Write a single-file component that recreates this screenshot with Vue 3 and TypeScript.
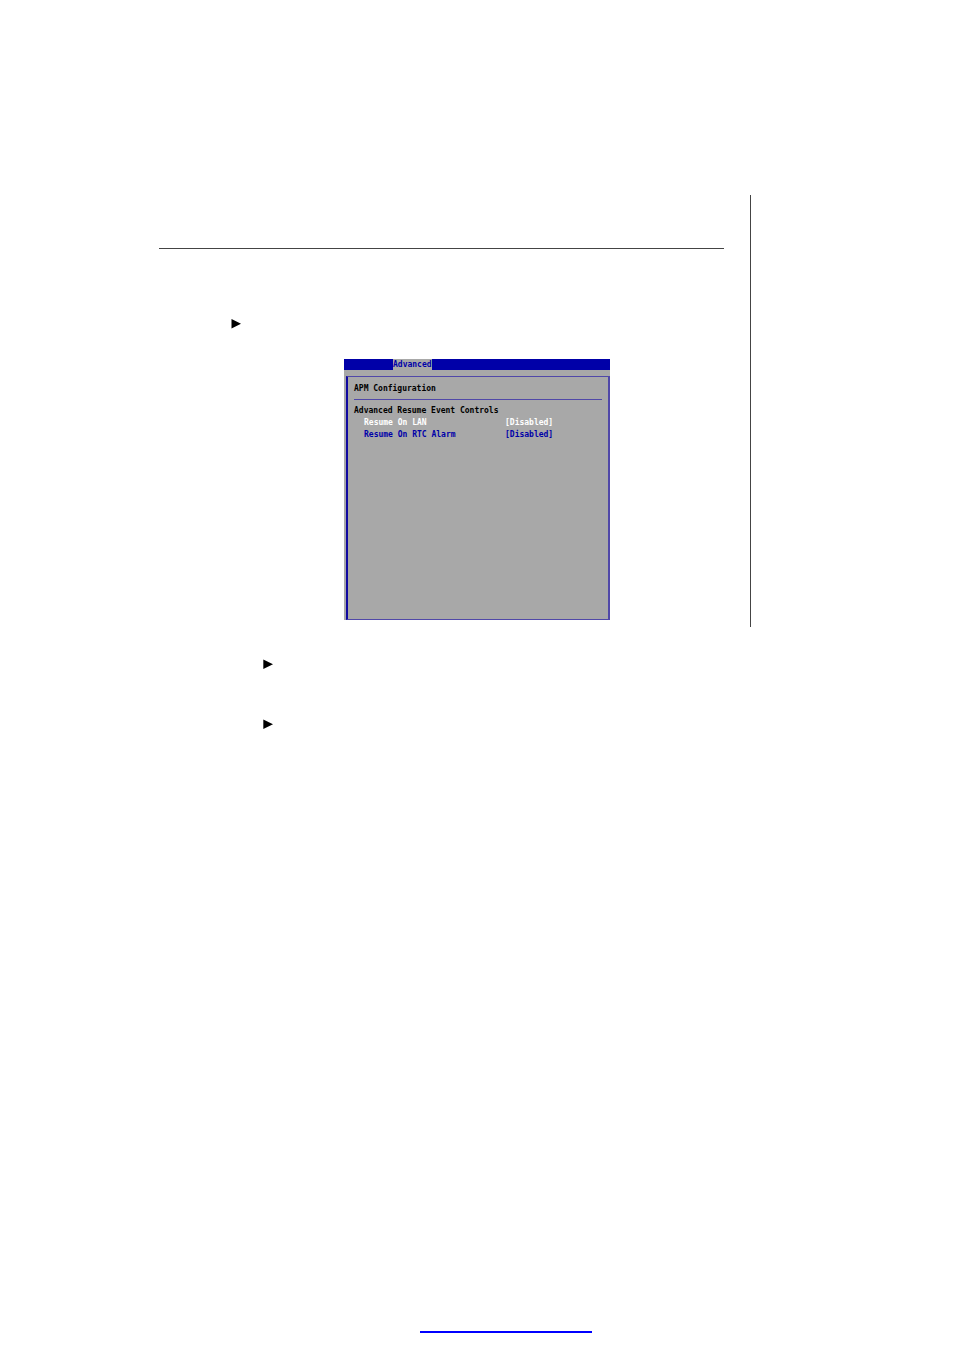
<script setup lang="ts">
interface Setting {
  id: string
  label: string
  value: string
  active: boolean
}

const settings: Setting[] = [
  { id: 'lan', label: 'Resume On LAN', value: '[Disabled]', active: true },
  { id: 'rtc', label: 'Resume On RTC Alarm', value: '[Disabled]', active: false },
]

const notes: number[] = [1, 2]
</script>

<template>
  <div class="page">
    <main class="sheet">
      <hr class="rule" />
      <svg class="marker" viewBox="0 0 10 10" aria-hidden="true"><path d="M0.5 0 L10 4.7 L0.5 9.5 Z" /></svg>

      <section class="bios">
        <nav class="menu">
          <button type="button" class="tab">Advanced</button>
        </nav>
        <div class="frame">
          <h1 class="title">APM Configuration</h1>
          <h2 class="group">Advanced Resume Event Controls</h2>
          <div
            v-for="item in settings"
            :key="item.id"
            class="setting"
            :class="{ active: item.active }"
          >
            <span :id="item.id">{{ item.label }}</span>
            <button type="button" class="value" :aria-describedby="item.id">{{ item.value }}</button>
          </div>
        </div>
      </section>
    </main>

    <ul class="notes">
      <li v-for="note in notes" :key="note" class="note">
        <svg class="arrow" viewBox="0 0 10 10" aria-hidden="true"><path d="M0.3 0.5 L10 5.2 L0.3 10 Z" /></svg>
      </li>
    </ul>

    <footer class="footer">
      <a class="link" href="#"></a>
    </footer>
  </div>
</template>

<style>
body {
  margin: 0;
  background: #fff;
}
</style>

<style scoped>
.page {
  box-sizing: border-box;
  display: flex;
  flex-direction: column;
  min-height: 100vh;
  padding: 195px 203px 16px 158px;
  background: #fff;
}

.sheet {
  display: flex;
  flex-direction: column;
  padding: 53px 0 7px;
  border-right: 1px solid #444;
}

.rule {
  box-sizing: border-box;
  align-self: stretch;
  height: 1px;
  margin: 0 26px 0 1px;
  border: 0;
  background: #444;
}

.marker,
.arrow {
  display: block;
  width: 10px;
  height: 10px;
  fill: #000;
}

.marker {
  margin: 70px 0 30px 73px;
}

.bios {
  display: flex;
  flex-direction: column;
  min-height: 261px;
  margin: 0 140px 0 186px;
  background: #a8a8a8;
  color: #000;
  font: bold 8px/12px "DejaVu Sans Mono", monospace;
}

.menu {
  display: flex;
  height: 11px;
  padding-left: 49px;
  background: #0000a8;
}

.tab,
.value {
  margin: 0;
  padding: 0;
  border: 0;
  background: none;
  color: inherit;
  font: inherit;
  text-align: left;
}

.tab {
  height: 11px;
  background: #a8a8a8;
  color: #0000a8;
}

.frame {
  flex: 1;
  margin: 6px 0 0 2px;
  padding: 6px;
  border: solid #5048a8;
  border-width: 1px 2px 1px 2px;
  border-left-color: #1008a0;
}

.title,
.group {
  margin: 0;
  font: inherit;
}

.title {
  padding-bottom: 4px;
  margin-bottom: 5px;
  border-bottom: 1px solid #5048a8;
}

.setting {
  display: grid;
  grid-template-columns: 141px 1fr;
  padding-left: 10px;
  color: #0000a8;
}

.active {
  color: #fff;
}

.notes {
  display: flex;
  flex-direction: column;
  gap: 50px;
  margin: 32px 0 0;
  padding: 0 0 0 105px;
  list-style: none;
}

.footer {
  display: flex;
  margin-top: auto;
  padding: 0 159px 0 262px;
}

.link {
  flex: 1;
  height: 2px;
  background: #00f;
}
</style>
